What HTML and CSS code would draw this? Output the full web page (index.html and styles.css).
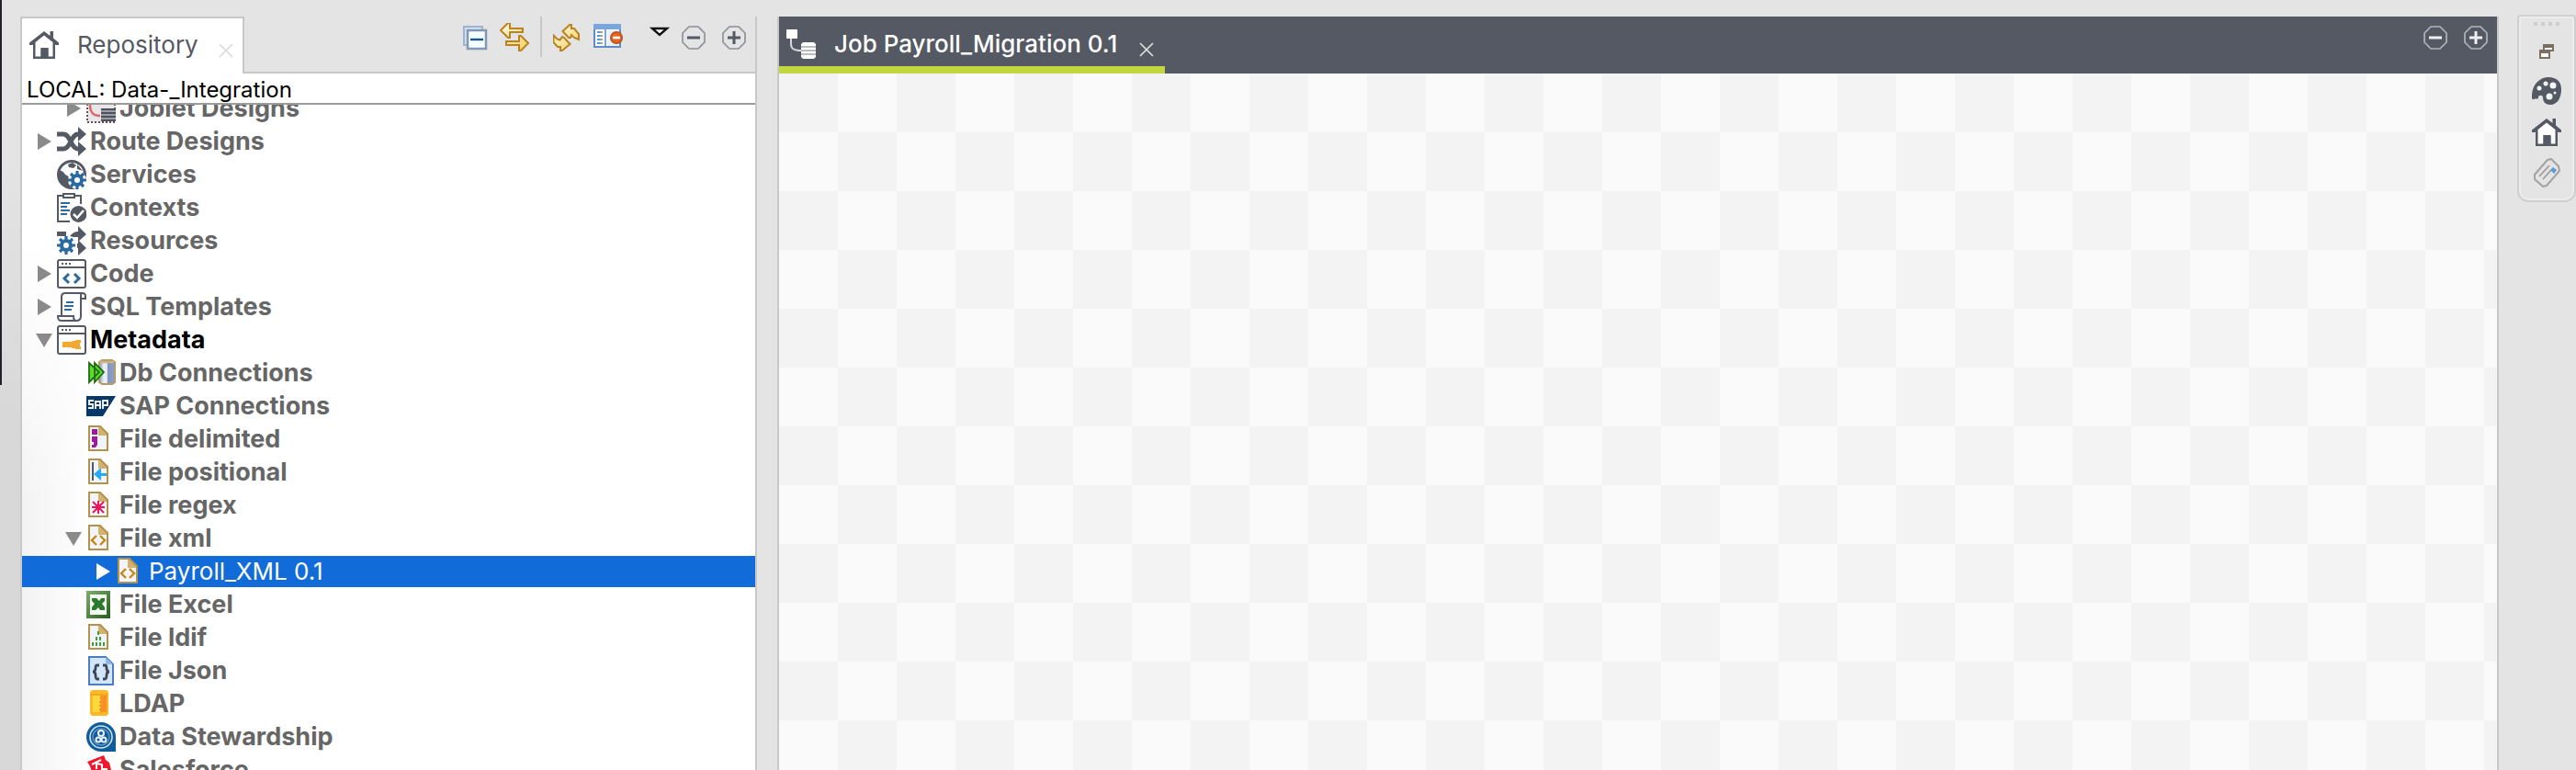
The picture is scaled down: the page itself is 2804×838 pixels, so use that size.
FILE: index.html
```html
<!DOCTYPE html>
<html lang="en">
<head>
<meta charset="utf-8">
<title>Job Payroll_Migration 0.1</title>
<link rel="stylesheet" href="styles.css">
</head>
<body>
<svg class="defs" aria-hidden="true">
  <defs>
    <symbol id="home" viewBox="0 0 32 32">
      <path d="M5 15v15h23V15L16 5z" fill="#fff"/>
      <path d="M16 1 0 13.500v2.500h3l1-.5V31h24V15.500l1 .5h3v-2.500L26 8.500V1h-3.500v5zM16 5.500l9.500 7.500v15.500h-5V19h-8v9.500h-6V13z" fill="#545964" fill-rule="evenodd"/>
      <path d="M12.500 19.500h8V30h-8z" fill="#545964"/>
    </symbol>
    <symbol id="page" viewBox="0 0 32 32">
      <path d="M3 2h12l8 8v18H3z" fill="#f1f4fa"/>
      <path d="M13 2h2l8 8v2H13z" fill="#d3b36c"/>
      <path d="M3 2h12l8 8v18H3z" fill="none" stroke="#b3924c" stroke-width="2"/>
    </symbol>
    <symbol id="file-xml" viewBox="0 0 32 32">
      <use href="#page"/>
      <path d="M11 13l-5 5 5 5M15 13l5 5-5 5" fill="none" stroke="#c98512" stroke-width="2.400"/>
    </symbol>
    <symbol id="cross" viewBox="0 0 16 16">
      <path d="M1 1l14 14M15 1 1 15" fill="none" stroke="currentColor" stroke-width="1.600"/>
    </symbol>
    <symbol id="minus" viewBox="0 0 26 26">
      <path d="M8 1h10l7 7v10l-7 7H8l-7-7V8z" fill="none" stroke="currentColor" stroke-width="1.700" stroke-linejoin="round" opacity=".6"/>
      <path d="M6 13h14" stroke="currentColor" stroke-width="3"/>
    </symbol>
    <symbol id="plus" viewBox="0 0 26 26">
      <use href="#minus"/>
      <path d="M13 6v14" stroke="currentColor" stroke-width="3"/>
    </symbol>
    <symbol id="window" viewBox="0 0 32 32">
      <rect x="1" y="1" width="30" height="30" rx="2" fill="#fff" stroke="#545964" stroke-width="2"/>
      <path d="M1 9h30" stroke="#545964" stroke-width="2"/>
      <path d="M5 5h2M9 5h2M13 5h2" stroke="#545964" stroke-width="2"/>
    </symbol>
    <symbol id="gear" viewBox="0 0 20 20">
      <path d="M10 0v20M0 10h20M3 3l14 14M17 3 3 17" stroke="#2b6a9e" stroke-width="3.200"/>
      <circle cx="10" cy="10" r="5" fill="#fff" stroke="#2b6a9e" stroke-width="4"/>
    </symbol>
    <linearGradient id="gold" x1="0" y1="0" x2="1" y2="1"><stop offset="0" stop-color="#fffbe0"/><stop offset="1" stop-color="#f6cf62"/></linearGradient>
    <linearGradient id="steel" x1="0" y1="0" x2="1" y2="0"><stop offset="0" stop-color="#8495bf"/><stop offset=".3" stop-color="#eef3fb"/><stop offset=".5" stop-color="#dde5f3"/><stop offset=".55" stop-color="#8495c0"/><stop offset="1" stop-color="#8fa0c8"/></linearGradient>
    <linearGradient id="excel" x1="0" y1="0" x2="1" y2="1"><stop offset="0" stop-color="#7fae6c"/><stop offset="1" stop-color="#255f1d"/></linearGradient>
    <radialGradient id="alert"><stop offset="0" stop-color="#f47a3a"/><stop offset=".7" stop-color="#e0601d"/><stop offset="1" stop-color="#a8481b"/></radialGradient>
  </defs>
</svg>

<main class="workbench">
  <div class="edge"></div>

  <section class="view">
    <header class="view-head">
      <div class="tab">
        <svg class="icon"><use href="#home"/></svg>
        <span class="tab-label">Repository</span>
        <button class="close" aria-label="Close Repository"><svg><use href="#cross"/></svg></button>
      </div>
      <div class="tools">
        <button class="tool" aria-label="Collapse all"><svg class="icon" viewBox="0 0 32 32">
          <path d="M5 4h20v20H5z" fill="#d2e4f2" stroke="#9fb4cc" stroke-width="2"/>
          <path d="M9 8h20v20H9z" fill="#f3fcff" stroke="#8497b4" stroke-width="2.500"/>
          <path d="M12 18h14" stroke="#1d5687" stroke-width="2.400"/></svg></button>
        <button class="tool" aria-label="Link with editor"><svg class="icon" viewBox="0 0 32 32">
          <path d="M1 8l8-8h2v6h14v4H11v6H9zM31 22l-8 8h-2v-6H7v-4h14v-6h2z" fill="url(#gold)" stroke="#b98322" stroke-width="2"/></svg></button>
        <span class="divider"></span>
        <button class="tool" aria-label="Refresh"><svg class="icon" viewBox="0 0 32 32">
          <path d="M10.500 9 18 2h2v4h3l5 6v6l-5-2-3-3-1 3h-2zM.5 13.500l4 4 3 1L10 15l2 1 6.500 7L10 30H8v-4H5l-4.500-5z" fill="url(#gold)" stroke="#b98322" stroke-width="2"/></svg></button>
        <button class="tool" aria-label="Activate filter"><svg class="icon" viewBox="0 0 32 32">
          <path d="M1 3h28v23H1z" fill="#fff" stroke="#5f8cc8" stroke-width="2"/>
          <path d="M0 1h30v6H0z" fill="#79a6dc"/><path d="M12 7h2v18h-2z" fill="#79a6dc"/><path d="M15 8h13v17H15z" fill="#e8f0fa"/>
          <path d="M4 10h3M4 14h3M4 18h3M4 22h3" stroke="#3fa0ee" stroke-width="2"/><path d="M7 10h3M7 14h3M7 18h3M7 22h3" stroke="#aaa08e" stroke-width="2"/>
          <circle cx="25" cy="16" r="7" fill="url(#alert)"/><path d="M21 16h8" stroke="#fff" stroke-width="2.500"/></svg></button>
        <button class="tool menu" aria-label="View menu"><svg class="icon" viewBox="0 0 32 32">
          <path d="M8 6h16l-8 7z" fill="#fff" stroke="#111" stroke-width="2.400"/></svg></button>
        <button class="tool round" aria-label="Minimize"><svg><use href="#minus"/></svg></button>
        <button class="tool round" aria-label="Maximize"><svg><use href="#plus"/></svg></button>
      </div>
    </header>

    <div class="location">LOCAL: Data-_Integration</div>

    <ul class="tree" role="tree">
      <li class="row level-2" role="treeitem" aria-expanded="false"><span class="twist shut"></span>
        <svg class="icon" viewBox="0 0 32 32"><path d="M1 1h30v30H1z" fill="#e8e6e8" stroke="#6b4f55" stroke-width="2" stroke-dasharray="2 2"/><path d="M4 12c0 9 4 12 11 12" fill="none" stroke="#d86a6a" stroke-width="2.500"/><path d="M16 16h16v13H16z" fill="#9a9da6"/><path d="M16 17h16M16 21h16M16 25h16M16 29h16" stroke="#4d515b" stroke-width="2"/></svg>
        <span class="label">Joblet Designs</span></li>
      <li class="row level-1" role="treeitem" aria-expanded="false"><span class="twist shut"></span>
        <svg class="icon" viewBox="0 0 32 32"><path d="M0 8h7c8 0 8 16 16 16h3M0 24h7c8 0 8-16 16-16h3" fill="none" stroke="#545964" stroke-width="5"/><path d="M23 0l9 8-9 8zM23 16l9 8-9 8z" fill="#545964"/></svg>
        <span class="label">Route Designs</span></li>
      <li class="row level-1" role="treeitem"><span class="twist"></span>
        <svg class="icon" viewBox="0 0 32 32"><circle cx="16" cy="16" r="14.500" fill="#fff" stroke="#545964" stroke-width="3"/><path d="M2 12c6-1 5 4 9 5 4 2 1 6 4 13C7 30 0 23 2 12zM12 5l5-2 4 3-3 3-5-1zM22 5l6 7-6-2z" fill="#545964"/><circle cx="22" cy="22" r="10" fill="#fff"/><use href="#gear" x="12" y="12" width="20" height="20"/></svg>
        <span class="label">Services</span></li>
      <li class="row level-1" role="treeitem"><span class="twist"></span>
        <svg class="icon" viewBox="0 0 32 32"><path d="M14 31H1V3h25v9" fill="none" stroke="#545964" stroke-width="2"/><path d="M7 1h12v4H7z" fill="#fff" stroke="#545964" stroke-width="2"/><path d="M4 11h10M4 15h7M4 19h10M4 23h7" stroke="#2b6a9e" stroke-width="2"/><circle cx="23.500" cy="23" r="9" fill="#545964"/><path d="M18 23l4 4 7-8" fill="none" stroke="#fff" stroke-width="2.500"/></svg>
        <span class="label">Contexts</span></li>
      <li class="row level-1" role="treeitem"><span class="twist"></span>
        <svg class="icon" viewBox="0 0 32 32"><path d="M0 6h10v5H0zM14 11c3-3 5-5 9-5h2v6h-7zM22 24h4v-5h-4z" fill="#545964"/><path d="M23 0l9 9-9 8zM23 15l9 9-9 8z" fill="#545964"/><use href="#gear" x="0" y="11" width="20" height="20"/></svg>
        <span class="label">Resources</span></li>
      <li class="row level-1" role="treeitem" aria-expanded="false"><span class="twist shut"></span>
        <svg class="icon" viewBox="0 0 32 32"><use href="#window"/><path d="M13 16l-5 5 5 5M19 16l5 5-5 5" fill="none" stroke="#2b6a9e" stroke-width="3"/></svg>
        <span class="label">Code</span></li>
      <li class="row level-1" role="treeitem" aria-expanded="false"><span class="twist shut"></span>
        <svg class="icon" viewBox="0 0 32 32"><path d="M5 25V5c0-3 1-4 4-4h18c3 0 4 1 4 3v3h-5v19c0 4-2 5-5 5H5c-3 0-4-1-4-5h17c0 3 1 5 3 5M26 7V4c0-2 0-3 2-3" fill="#fff" stroke="#545964" stroke-width="2"/><path d="M10 11h8M8 15h10M8 19h8" stroke="#2b6a9e" stroke-width="2"/></svg>
        <span class="label">SQL Templates</span></li>
      <li class="row level-1 open" role="treeitem" aria-expanded="true"><span class="twist down"></span>
        <svg class="icon" viewBox="0 0 32 32"><use href="#window"/><path d="M6 18h10v-1h4v-1h6v3h-1v4h1v3h-6v-1h-4v-1H6z" fill="#f5a733"/></svg>
        <span class="label">Metadata</span></li>
      <li class="row level-2" role="treeitem"><span class="twist"></span>
        <svg class="icon" viewBox="0 0 32 32"><path d="M14 4l3-2h11l3 2v22l-3 2H17l-3-2z" fill="url(#steel)" stroke="#b59a62" stroke-width="2"/><path d="M15 4h15" stroke="#cbb583" stroke-width="2.500"/><path d="M3 5l11 10L3 26zM9 5l10 10L9 26z" fill="#5fdc2b" stroke="#1d6d12" stroke-width="1.800"/></svg>
        <span class="label">Db Connections</span></li>
      <li class="row level-2" role="treeitem"><span class="twist"></span>
        <svg class="icon" viewBox="0 0 32 32"><path d="M0 5h32L18 27H0z" fill="#063868"/><path d="M8 10H3v4h4v4H2M10 19v-8h5v8M10 15h5M18 19v-9h5v5h-5" fill="none" stroke="#fff" stroke-width="1.800"/></svg>
        <span class="label">SAP Connections</span></li>
      <li class="row level-2" role="treeitem"><span class="twist"></span>
        <svg class="icon" viewBox="0 0 32 32"><use href="#page"/><path d="M6 5h6v6H6zM6 13h6v9l-2 3H6v-3h2v-3H6z" fill="#9a1c9c"/></svg>
        <span class="label">File delimited</span></li>
      <li class="row level-2" role="treeitem"><span class="twist"></span>
        <svg class="icon" viewBox="0 0 32 32"><use href="#page"/><path d="M6 5h2v20H6z" fill="#4b5875"/><path d="M8 18l8-7v6h6v3h-6v5z" fill="#27a9f7"/></svg>
        <span class="label">File positional</span></li>
      <li class="row level-2" role="treeitem"><span class="twist"></span>
        <svg class="icon" viewBox="0 0 32 32"><use href="#page"/><path d="M13 11v14M6 18h14M7 12l12 12M19 12 7 24" stroke="#e8175d" stroke-width="2"/><circle cx="13" cy="18" r="3" fill="#e8175d"/></svg>
        <span class="label">File regex</span></li>
      <li class="row level-2" role="treeitem" aria-expanded="true"><span class="twist down"></span>
        <svg class="icon"><use href="#file-xml"/></svg>
        <span class="label">File xml</span></li>
      <li class="row level-3 selected" role="treeitem" aria-expanded="false" aria-selected="true"><span class="twist shut"></span>
        <svg class="icon"><use href="#file-xml"/></svg>
        <span class="label">Payroll_XML 0.1</span></li>
      <li class="row level-2" role="treeitem"><span class="twist"></span>
        <svg class="icon" viewBox="0 0 32 32"><path d="M0 1h26v30H0z" fill="url(#excel)"/><path d="M4 5h18v22H4z" fill="#f4f8f2"/><path d="M6 9h5l3 3 2-3h4v3l-3 3 3 4v3h-5l-2-3-3 3H6v-3l3-4-3-3z" fill="#2c7a2c"/></svg>
        <span class="label">File Excel</span></li>
      <li class="row level-2" role="treeitem"><span class="twist"></span>
        <svg class="icon" viewBox="0 0 32 32"><use href="#page"/><path d="M12 9h2v4h-2zM10 15h2v4h-2zM14 15h2v4h-2zM6 21h2v4H6zM10 21h2v4h-2zM14 21h2v4h-2zM18 21h2v4h-2z" fill="#3f9e33"/></svg>
        <span class="label">File ldif</span></li>
      <li class="row level-2" role="treeitem"><span class="twist"></span>
        <svg class="icon" viewBox="0 0 32 32"><path d="M3 1h18l8 8v22H3z" fill="#d3e5fb" stroke="#4a7ec2" stroke-width="2"/><path d="M21 1v8h8z" fill="#8db8ee"/><path d="M14 10h-2c-2 0-2 1-2 3 0 3-1 4-3 4 2 0 3 1 3 4 0 2 0 4 2 4h2M18 10h2c2 0 2 1 2 3 0 3 1 4 3 4-2 0-3 1-3 4 0 2 0 4-2 4h-2" fill="none" stroke="#3d4656" stroke-width="2.800"/></svg>
        <span class="label">File Json</span></li>
      <li class="row level-2" role="treeitem"><span class="twist"></span>
        <svg class="icon" viewBox="0 0 32 32"><path d="M6 1h16l2 2v24l-2 2H6l-2-2V3z" fill="#fdb924"/><path d="M4 5h20v2H4z" fill="#f5a623"/><path d="M7 7h8v18H7z" fill="#ffd93b"/><path d="M15 7h7v18h-7v-2h-1v-2h2v-2h-2v-2h2v-2h-2v-2h2v-2h-1z" fill="#f98f2b"/></svg>
        <span class="label">LDAP</span></li>
      <li class="row level-2" role="treeitem"><span class="twist"></span>
        <svg class="icon" viewBox="0 0 32 32"><path d="M16 0a16 16 0 0 1 16 16v16H16a16 16 0 0 1 0-32z" fill="#0f5c9a"/><circle cx="16" cy="16" r="12" fill="none" stroke="#cfe0ee" stroke-width="1.600"/><circle cx="16" cy="16" r="9" fill="none" stroke="#5e93c0" stroke-width="1.500"/><g fill="none" stroke="#e9f2f9" stroke-width="2"><circle cx="16" cy="12" r="3"/><circle cx="13" cy="19" r="2.500"/><circle cx="19" cy="19" r="2.500"/></g></svg>
        <span class="label">Data Stewardship</span></li>
      <li class="row level-2" role="treeitem"><span class="twist"></span>
        <svg class="icon" viewBox="0 0 32 32"><path d="M1 7 19 0l2 5 4 3 2 8-8 8H8L4 12z" fill="#f0182c"/><path d="M6 10l10-5M11 15V9l6 1v5h6" fill="none" stroke="#fff" stroke-width="2"/></svg>
        <span class="label">Salesforce</span></li>
    </ul>
  </section>

  <section class="editor">
    <header class="editor-head">
      <div class="editor-tab">
        <svg class="icon" viewBox="0 0 32 32"><rect width="12" height="10" rx="1" fill="#fff"/><path d="M5 10v6c0 5 3 7 11 7" fill="none" stroke="#d9dade" stroke-width="2"/><path d="M18 14h12l2 2v14l-2 2H18l-2-2V16z" fill="#fff"/><path d="M16 19h16M16 23h16M16 27h16" stroke="#a3a6ad" stroke-width="1.600"/></svg>
        <span class="tab-label">Job Payroll_Migration 0.1</span>
        <button class="close" aria-label="Close Job Payroll_Migration 0.1"><svg><use href="#cross"/></svg></button>
      </div>
      <div class="tools light">
        <button class="tool round" aria-label="Minimize editor"><svg><use href="#minus"/></svg></button>
        <button class="tool round" aria-label="Maximize editor"><svg><use href="#plus"/></svg></button>
      </div>
    </header>
    <div class="canvas"></div>
  </section>

  <aside class="trim">
    <span class="grip"><i></i><i></i><i></i><i></i></span>
    <button class="tool" aria-label="Restore"><svg class="icon" viewBox="0 0 32 32"><path d="M13 9h10v6H13z" fill="#fff" stroke="#7a6f62" stroke-width="2"/><path d="M12 8h12v4H12zM8 14h12v4H8z" fill="#7a6f62"/><path d="M9 15h10v8H9z" fill="none" stroke="#7a6f62" stroke-width="2"/><path d="M10 18h8v4h-8z" fill="#fff"/></svg></button>
    <button class="tool" aria-label="Palette"><svg class="icon" viewBox="0 0 32 32"><path d="M0 23C-1 9 8 0 18 0c9 0 14 5 14 13 0 9-4 17-12 17-6 0-8-4-8-8 0-3-5-3-5 0 0 2-2 2-3 1-1 1-3 2-4 0z" fill="#545964"/><g fill="#f3f3f5"><circle cx="8" cy="12" r="2.500"/><circle cx="15" cy="7" r="2.500"/><circle cx="23" cy="9" r="3.500"/><circle cx="25" cy="17" r="1.500"/><circle cx="19" cy="21" r="3.500"/></g></svg></button>
    <button class="tool" aria-label="Repository view"><svg class="icon"><use href="#home"/></svg></button>
    <button class="tool" aria-label="Component tags"><svg class="icon" viewBox="0 0 32 32"><path d="M3 18 17 2l4-1 8 8 1 5-14 16-4 1-9-8z" fill="#e3e3e3" stroke="#a2a2a2" stroke-width="2"/><path d="M8 20 19 8M12 23l9-10" stroke="#9c9c9c" stroke-width="1.800"/><path d="M20 13l3-3 4 3-3 4z" fill="#5b9bd0"/></svg></button>
  </aside>
</main>
</body>
</html>
```
FILE: styles.css
```css
* { box-sizing: border-box; }

body {
  margin: 0;
  background: #e4e4e4;
  font-family: Inter, "Liberation Sans", sans-serif;
  font-size: 26px;
  line-height: 36px;
  color: #666;
}

button {
  margin: 0;
  padding: 0;
  border: 0;
  background: none;
  color: inherit;
  font: inherit;
}

svg { display: block; }

.defs {
  position: absolute;
  width: 0;
  height: 0;
}

.icon {
  flex: none;
  width: 32px;
  height: 32px;
}

.workbench {
  display: flex;
  align-items: flex-start;
  height: 100vh;
  overflow: hidden;
}

.edge {
  flex: none;
  align-self: stretch;
  width: 22px;
  background:
    linear-gradient(#20242a, #20242a) 0 0 / 2px 50% no-repeat,
    linear-gradient(#e4e4e4 20%, #d8d8d8 55%);
}

.view {
  display: flex;
  flex: none;
  flex-direction: column;
  align-self: stretch;
  width: 802px;
  margin-top: 18px;
  border: solid #c8c8c8;
  border-width: 0 2px;
  background: #fff;
}

.view-head {
  display: flex;
  height: 62px;
  background: linear-gradient(#c8c8c8, #c8c8c8) bottom / 100% 2px no-repeat #e4e4e4;
}

.tab {
  display: flex;
  align-items: center;
  width: 242px;
  padding: 0 10px 2px 8px;
  border: solid #c8c8c8;
  border-width: 2px 2px 0 0;
  background: #fff;
  color: #545964;
}

.tab-label {
  flex: 1;
  padding-left: 20px;
  white-space: nowrap;
}

.close {
  width: 16px;
  height: 16px;
  margin-top: 12px;
  color: #dadada;
}

.close svg {
  width: 16px;
  height: 16px;
}

.tools {
  display: flex;
  gap: 12px;
  margin-left: auto;
  padding: 7px 10px 0 0;
  color: #545964;
}

.tool {
  display: grid;
  place-items: center;
  flex: none;
  width: 32px;
  height: 32px;
}

.round svg {
  width: 26px;
  height: 26px;
}

.round {
  width: 26px;
  margin-left: 6px;
}

.menu { margin: 0 -10px 0 12px; }

.divider {
  width: 2px;
  height: 44px;
  margin-top: -7px;
  background: #c8c8c8;
}

.light { color: #f0f0f2; }

.location {
  height: 34px;
  padding-left: 5px;
  border-bottom: 2px solid #9b9b9b;
  color: #000;
  font-size: 24px;
}

.tree {
  flex: 1;
  min-height: 0;
  margin: 0;
  padding: 0;
  overflow: hidden;
  list-style: none;
  font-weight: 700;
  font-size: 27px;
  background:
    linear-gradient(#fff 20%, transparent 60%),
    linear-gradient(to right, #f3f3f3, #fff 80px);
}

.row {
  display: flex;
  align-items: center;
  height: 36px;
  white-space: nowrap;
  border: solid transparent;
  border-width: 1px 0;
  background-clip: padding-box;
}

.row:first-child { margin-top: -14px; }

.level-1 { padding-left: 14px; }
.level-2 { padding-left: 46px; }
.level-3 { padding-left: 78px; }

.label { padding-left: 4px; }

.open { color: #000; }

.selected {
  background-color: #116bd8;
  color: #fff;
  font-weight: 400;
  font-size: 26px;
}

.twist {
  flex: none;
  width: 20px;
  height: 18px;
  margin-right: 4px;
}

.shut::before,
.down::before {
  content: "";
  display: block;
  width: 15px;
  height: 18px;
  margin-left: 3px;
  background: #8a8a8a;
  clip-path: polygon(0 0, 100% 50%, 0 100%);
}

.down::before {
  width: 18px;
  height: 15px;
  margin: 2px 0 0 1px;
  clip-path: polygon(0 0, 100% 0, 50% 100%);
}

.selected .shut::before { background: #fff; }

.editor {
  display: flex;
  flex: 1;
  flex-direction: column;
  align-self: stretch;
  min-width: 0;
  margin: 18px 20px 0 22px;
  border: solid #c8c8c8;
  border-width: 0 2px;
}

.editor-head {
  display: flex;
  height: 62px;
  background: #545964;
  color: #fff;
}

.editor-tab {
  display: flex;
  align-items: center;
  width: 420px;
  padding: 6px 12px 0 8px;
  border-bottom: 8px solid #c1d63f;
  font-weight: 500;
}

.editor-tab .close { color: #e4e4e6; }

.canvas {
  flex: 1;
  background: repeating-conic-gradient(#fafafa 0 25%, #f3f3f3 0 50%) 0 0 / 128px 128px;
}

.trim {
  display: flex;
  flex: none;
  flex-direction: column;
  align-items: center;
  gap: 12px;
  width: 64px;
  margin-top: 16px;
  padding: 6px 0 14px;
  border: 2px solid #cfcfcf;
  border-radius: 4px 4px 12px 12px;
  box-shadow: inset 0 0 0 2px #ececec;
}

.grip {
  display: flex;
  gap: 4px;
  height: 4px;
}

.grip i {
  width: 4px;
  height: 4px;
  background: #cdcdcd;
}
```
